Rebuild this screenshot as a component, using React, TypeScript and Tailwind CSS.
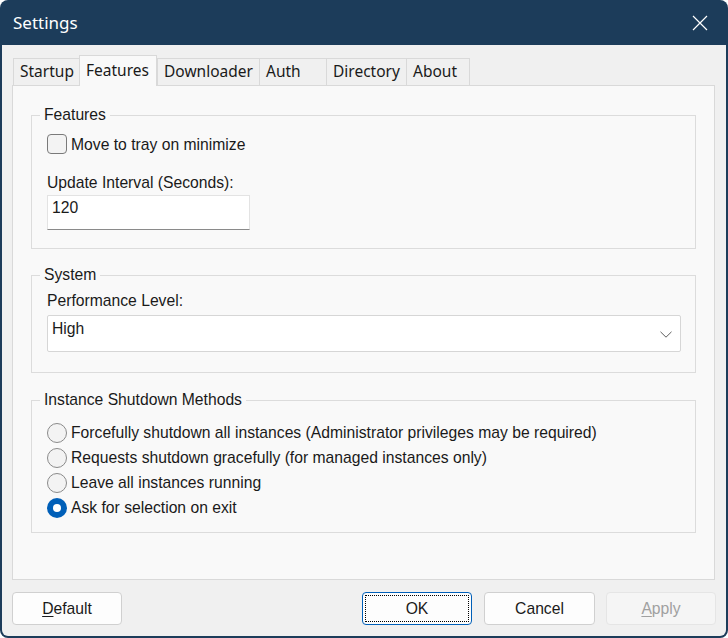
import React, { useState } from 'react';

const tabs = [
    { name: 'Startup', w: 'w-[66px]' },
    { name: 'Features', w: 'w-[78px]' },
    { name: 'Downloader', w: 'w-[102px]' },
    { name: 'Auth', w: 'w-[67px]' },
    { name: 'Directory', w: 'w-[80px]' },
    { name: 'About', w: 'w-[64px]' },
];

const shutdownOptions = [
    'Forcefully shutdown all instances (Administrator privileges may be required)',
    'Requests shutdown gracefully (for managed instances only)',
    'Leave all instances running',
    'Ask for selection on exit',
];

const CloseIcon: React.FC<{ className?: string }> = ({ className }) => (
    <svg className={className} viewBox="0 0 16 16" fill="none" stroke="currentColor" strokeWidth={1.2}>
        <path d="M1 1l14 14M15 1L1 15" />
    </svg>
);

const ChevronIcon: React.FC<{ className?: string }> = ({ className }) => (
    <svg className={className} viewBox="0 0 12 7" fill="none" stroke="currentColor" strokeWidth={1}>
        <path d="M0.5 0.8L6 6.2L11.5 0.8" />
    </svg>
);

const GroupBox: React.FC<{ title: string; className?: string; children: React.ReactNode }> = ({ title, className, children }) => (
    <fieldset className={`border border-[#dcdcdc] p-0 m-0 min-w-0 ${className ?? ''}`}>
        <legend className="ml-[8px] px-[4px] leading-[18px] text-[#1a1a1a]">{title}</legend>
        {children}
    </fieldset>
);

const Radio: React.FC<{ checked: boolean; label: string; onClick: () => void }> = ({ checked, label, onClick }) => (
    <div className="flex h-[25px] items-center gap-[4px] cursor-default" onClick={onClick}>
        {checked ? (
            <span className="flex h-[20px] w-[20px] items-center justify-center rounded-full bg-[#005fb8]">
                <span className="h-[8px] w-[8px] rounded-full bg-white" />
            </span>
        ) : (
            <span className="h-[20px] w-[20px] rounded-full border border-[#8a8a8a] bg-[#f3f3f3]" />
        )}
        <span>{label}</span>
    </div>
);

export default function App() {
    const [active, setActive] = useState('Features');
    const [shutdown, setShutdown] = useState(3);
    const [tray, setTray] = useState(false);

    return (
        <div className="h-[638px] w-[728px] bg-white font-['Liberation_Sans',Arial,sans-serif] text-[15.7px] text-[#1a1a1a]">
            <div className="flex h-full flex-col overflow-hidden rounded-[8px] bg-[#1c3c5a]">
                {/* title bar */}
                <div className="flex h-[45px] shrink-0 items-center justify-between pl-[13px] pr-[20px] text-white">
                    <span className="font-['Noto_Sans',sans-serif] text-[17px] leading-none">Settings</span>
                    <CloseIcon className="h-[16px] w-[16px]" />
                </div>

                <div className="mx-[2px] mb-[2px] flex flex-1 flex-col rounded-b-[6px] bg-[#f0f0f0] pl-[10px] pr-[11px] pt-[10px]">
                    {/* tabs */}
                    <div className="relative z-10 -mb-px flex h-[31px] items-end pl-px font-['Noto_Sans',sans-serif] text-[15.5px]">
                        {tabs.map((t, i) => {
                            const sel = t.name === active;
                            return (
                                <div
                                    key={t.name}
                                    onClick={() => setActive(t.name)}
                                    className={`${t.w} flex items-center border-t border-l border-[#d9d9d9] pl-[6px] ${i === tabs.length - 1 ? 'border-r' : ''} ${sel ? 'h-[31px] border-r bg-[#f9f9f9]' : 'mb-px h-[27px] bg-[#f0f0f0]'}`}
                                >
                                    {t.name}
                                </div>
                            );
                        })}
                    </div>

                    {/* panel */}
                    <div className="flex h-[495px] flex-col border border-[#d9d9d9] bg-[#f9f9f9] px-[18px]">
                        <GroupBox title="Features" className="mt-[20px]">
                            <div className="pl-[15px] pb-[18px]">
                                <div className="mt-[10px] flex h-[20px] items-center gap-[4px]" onClick={() => setTray(!tray)}>
                                    <span className="h-[20px] w-[20px] rounded-[4px] border border-[#7a7a7a] bg-[#f3f3f3]" />
                                    <span className="translate-y-[1px]">Move to tray on minimize</span>
                                </div>
                                <div className="mt-[19px] leading-[18px] translate-y-[1px]">Update Interval (Seconds):</div>
                                <div className="mt-[4px] h-[35px] w-[203px] border border-[#e3e3e3] border-b-[#8a8a8a] bg-white pl-[4px] pt-[3px] leading-[18px]">
                                    120
                                </div>
                            </div>
                        </GroupBox>

                        <GroupBox title="System" className="mt-[17px]">
                            <div className="pl-[15px] pr-[14px] pb-[20px]">
                                <div className="mt-[8px] leading-[18px]">Performance Level:</div>
                                <div className="mt-[5px] flex h-[37px] justify-between rounded-[2px] border border-[#d6d6d6] bg-white pl-[4px] pr-[8px]">
                                    <span className="pt-[4px] leading-[18px]">High</span>
                                    <ChevronIcon className="mt-[15px] h-[7px] w-[12px] text-[#5d5d5d]" />
                                </div>
                            </div>
                        </GroupBox>

                        <GroupBox title="Instance Shutdown Methods" className="mt-[18px]">
                            <div className="pl-[15px] pt-[11px] pb-[12px]">
                                {shutdownOptions.map((o, i) => (
                                    <Radio key={o} label={o} checked={shutdown === i} onClick={() => setShutdown(i)} />
                                ))}
                            </div>
                        </GroupBox>
                    </div>

                    {/* buttons */}
                    <div className="-mr-px mt-[12px] flex h-[33px]">
                        <button className="h-[33px] w-[110px] rounded-[4px] border border-[#d0d0d0] bg-[#fdfdfd]">
                            <span className="underline underline-offset-2">D</span>efault
                        </button>
                        <button className="relative ml-auto h-[33px] w-[110px] rounded-[4px] border border-[#005fb8] bg-[#fdfdfd]">
                            <span className="pointer-events-none absolute inset-[2px] border border-dotted border-black" />
                            OK
                        </button>
                        <button className="ml-[12px] h-[33px] w-[111px] rounded-[4px] border border-[#d0d0d0] bg-[#fdfdfd]">Cancel</button>
                        <button className="ml-[11px] h-[33px] w-[110px] rounded-[4px] border border-[#e5e5e5] bg-[#f5f5f5] text-[#a0a0a0]">
                            <span className="underline underline-offset-2">A</span>pply
                        </button>
                    </div>
                </div>
            </div>
        </div>
    );
}
